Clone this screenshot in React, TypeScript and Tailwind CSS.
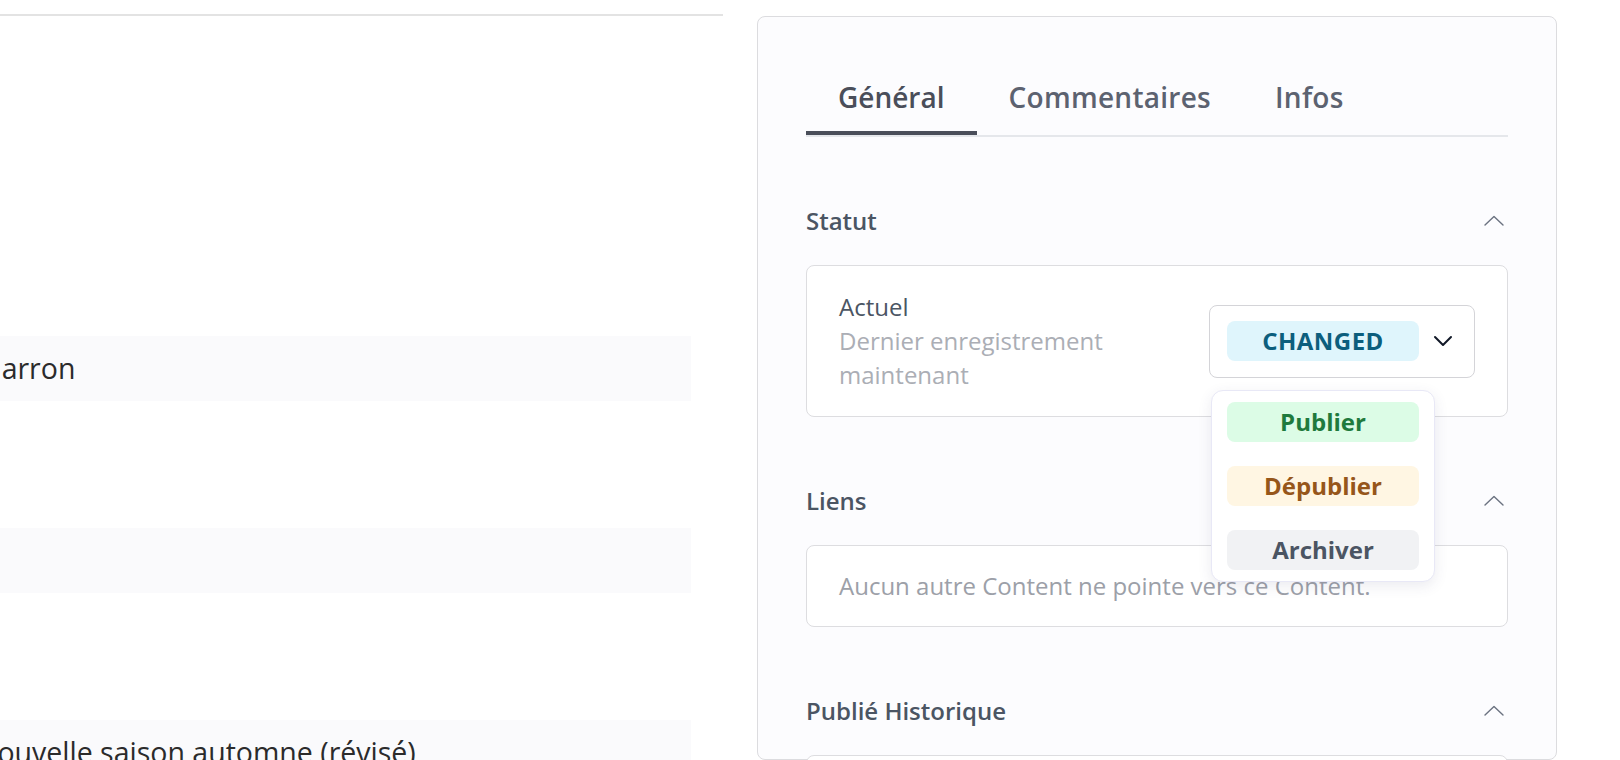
import type { ReactNode } from "react";

/** Content edit screen, right-hand sidebar with the status dropdown open. */

const rows = ["Marron", "", "Nouvelle saison automne (révisé)"];

function ChevronUp() {
  return (
    <svg width="20" height="11" viewBox="0 0 20 11" fill="none" aria-hidden>
      <polyline points="1,10 10,1.5 19,10" stroke="#6b7280" strokeWidth="1.4" strokeLinecap="round" strokeLinejoin="round" />
    </svg>
  );
}

function ChevronDown() {
  return (
    <svg width="20" height="12" viewBox="0 0 20 12" fill="none" aria-hidden>
      <polyline points="2,2 10,10 18,2" stroke="#111827" strokeWidth="2" strokeLinecap="round" strokeLinejoin="round" />
    </svg>
  );
}

const badgeTone = {
  changed: "bg-[#dff5fc] text-[#0c5e7d] tracking-[0.02em]",
  publish: "bg-[#dcfce6] text-[#1f7a3d]",
  unpublish: "bg-[#fff6e3] text-[#96561a]",
  archive: "bg-[#f1f2f4] text-[#4b5563]",
} as const;

function Badge({ tone, children }: { tone: keyof typeof badgeTone; children: ReactNode }) {
  return (
    <div
      className={`flex h-[40px] w-[192px] items-center justify-center rounded-[8px] text-[24px] font-bold ${badgeTone[tone]}`}
    >
      {children}
    </div>
  );
}

function Section({ title, first, children }: { title: string; first?: boolean; children: ReactNode }) {
  return (
    <section className={first ? "mt-[67px]" : "mt-[67px]"}>
      <div className="flex h-[33px] items-center justify-between pr-[4px]">
        <h3 className="text-[24px] font-semibold leading-[33px] text-[#4b5563]">{title}</h3>
        <ChevronUp />
      </div>
      <div className="mt-[28px]">{children}</div>
    </section>
  );
}

export default function App() {
  const tabs = ["Général", "Commentaires", "Infos"];
  return (
    <div className="flex h-[760px] w-[1620px] overflow-hidden bg-white font-['Open_Sans',sans-serif]">
      {/* form column, scrolled partly off-screen */}
      <div className="w-[723px] shrink-0 pt-[14px]">
        <div className="border-t-2 border-[#e3e3e3]" />
        <div className="flex flex-col gap-[127px] pt-[320px]">
          {rows.map((r, i) => (
            <div key={i} className="flex h-[65px] w-[691px] items-center overflow-hidden bg-[#fafafc]">
              <span className="-ml-[24px] -mt-[1px] whitespace-nowrap text-[28.5px] text-[#2b2b2b]">{r}</span>
            </div>
          ))}
        </div>
      </div>

      {/* sidebar */}
      <aside className="ml-[34px] mt-[16px] w-[800px] shrink-0 rounded-[8px] border border-[#dcdcdf] bg-[#fcfcfe] px-[48px] pt-[60px]">
        <div className="flex border-b-2 border-[#e5e7eb]">
          {tabs.map((t, i) => (
            <button
              key={t}
              type="button"
              className={`border-b-4 px-[32px] pb-[14px] text-[28px] font-semibold leading-[40px] ${
                i === 0 ? "border-[#4a4e5a] text-[#4a4e5a]" : "border-transparent tracking-[0.01em] text-[#5c6270]"
              }`}
            >
              {t}
            </button>
          ))}
        </div>

        <Section title="Statut" first>
          <div className="flex items-center justify-between gap-[28px] rounded-[8px] border border-[#dddde0] bg-white px-[32px] py-[24px]">
            <div className="flex-1 text-[24px] leading-[34px]">
              <div className="text-[#4b5563]">Actuel</div>
              <div className="text-[#abaeb5]">Dernier enregistrement maintenant</div>
            </div>
            <div className="relative flex h-[73px] w-[266px] shrink-0 items-center rounded-[8px] border border-[#d4d4d8] bg-white pl-[17px]">
              <Badge tone="changed">CHANGED</Badge>
              <span className="ml-[14px] flex">
                <ChevronDown />
              </span>
              <div className="absolute left-[1px] top-[84px] z-10 flex w-[224px] flex-col gap-[24px] rounded-[12px] border border-[#e8e8f6] bg-white px-[15px] py-[11px] shadow-[0_4px_14px_rgba(60,60,110,0.10)]">
                <Badge tone="publish">Publier</Badge>
                <Badge tone="unpublish">Dépublier</Badge>
                <Badge tone="archive">Archiver</Badge>
              </div>
            </div>
          </div>
        </Section>

        <Section title="Liens">
          <div className="rounded-[8px] border border-[#dddde0] bg-white px-[32px] py-[24px] text-[24px] leading-[32px] text-[#9ca0a8]">
            Aucun autre Content ne pointe vers ce Content.
          </div>
        </Section>

        <Section title="Publié Historique">
          <div className="h-[120px] rounded-[8px] border border-[#dddde0] bg-white" />
        </Section>
      </aside>
    </div>
  );
}
